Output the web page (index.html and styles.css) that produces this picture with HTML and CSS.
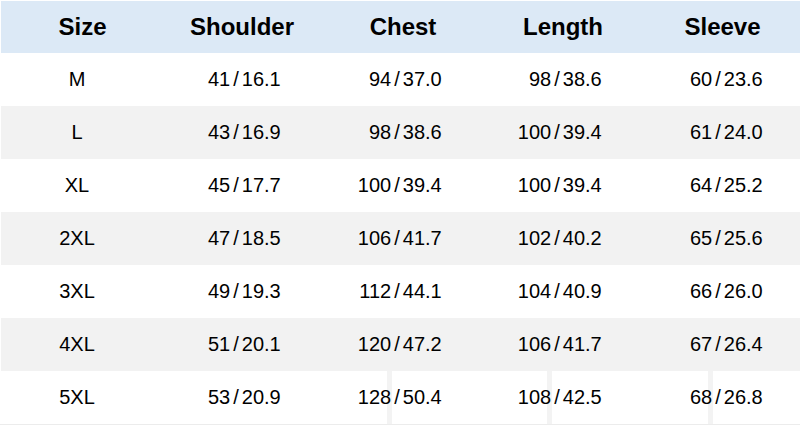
FILE: index.html
```html
<!DOCTYPE html>
<html lang="en">
<head>
<meta charset="utf-8">
<title>Size chart</title>
<link rel="stylesheet" href="styles.css">
</head>
<body>
<div class="chart">
  <div class="row head">
    <div class="cell size">Size</div>
    <div class="cell">Shoulder</div>
    <div class="cell">Chest</div>
    <div class="cell">Length</div>
    <div class="cell">Sleeve</div>
  </div>
  <div class="row">
    <div class="cell size">M</div>
    <div class="cell val"><span class="a">41</span><span class="s">/</span><span class="b">16.1</span></div>
    <div class="cell val"><span class="a">94</span><span class="s">/</span><span class="b">37.0</span></div>
    <div class="cell val"><span class="a">98</span><span class="s">/</span><span class="b">38.6</span></div>
    <div class="cell val"><span class="a">60</span><span class="s">/</span><span class="b">23.6</span></div>
  </div>
  <div class="row alt">
    <div class="cell size">L</div>
    <div class="cell val"><span class="a">43</span><span class="s">/</span><span class="b">16.9</span></div>
    <div class="cell val"><span class="a">98</span><span class="s">/</span><span class="b">38.6</span></div>
    <div class="cell val"><span class="a">100</span><span class="s">/</span><span class="b">39.4</span></div>
    <div class="cell val"><span class="a">61</span><span class="s">/</span><span class="b">24.0</span></div>
  </div>
  <div class="row">
    <div class="cell size">XL</div>
    <div class="cell val"><span class="a">45</span><span class="s">/</span><span class="b">17.7</span></div>
    <div class="cell val"><span class="a">100</span><span class="s">/</span><span class="b">39.4</span></div>
    <div class="cell val"><span class="a">100</span><span class="s">/</span><span class="b">39.4</span></div>
    <div class="cell val"><span class="a">64</span><span class="s">/</span><span class="b">25.2</span></div>
  </div>
  <div class="row alt">
    <div class="cell size">2XL</div>
    <div class="cell val"><span class="a">47</span><span class="s">/</span><span class="b">18.5</span></div>
    <div class="cell val"><span class="a">106</span><span class="s">/</span><span class="b">41.7</span></div>
    <div class="cell val"><span class="a">102</span><span class="s">/</span><span class="b">40.2</span></div>
    <div class="cell val"><span class="a">65</span><span class="s">/</span><span class="b">25.6</span></div>
  </div>
  <div class="row">
    <div class="cell size">3XL</div>
    <div class="cell val"><span class="a">49</span><span class="s">/</span><span class="b">19.3</span></div>
    <div class="cell val"><span class="a">112</span><span class="s">/</span><span class="b">44.1</span></div>
    <div class="cell val"><span class="a">104</span><span class="s">/</span><span class="b">40.9</span></div>
    <div class="cell val"><span class="a">66</span><span class="s">/</span><span class="b">26.0</span></div>
  </div>
  <div class="row alt">
    <div class="cell size">4XL</div>
    <div class="cell val"><span class="a">51</span><span class="s">/</span><span class="b">20.1</span></div>
    <div class="cell val"><span class="a">120</span><span class="s">/</span><span class="b">47.2</span></div>
    <div class="cell val"><span class="a">106</span><span class="s">/</span><span class="b">41.7</span></div>
    <div class="cell val"><span class="a">67</span><span class="s">/</span><span class="b">26.4</span></div>
  </div>
  <div class="row last">
    <div class="cell size">5XL</div>
    <div class="cell val"><span class="a">53</span><span class="s">/</span><span class="b">20.9</span></div>
    <div class="cell val mark"><span class="a">128</span><span class="s">/</span><span class="b">50.4</span></div>
    <div class="cell val mark"><span class="a">108</span><span class="s">/</span><span class="b">42.5</span></div>
    <div class="cell val mark"><span class="a">68</span><span class="s">/</span><span class="b">26.8</span></div>
  </div>
</div>
</body>
</html>
```

FILE: styles.css
```css
html {
  margin: 0;
  padding: 0;
  background: #ffffff;
}

body {
  margin: 0;
  padding: 0;
  font-family: "Liberation Sans", Arial, sans-serif;
  color: #000;
  width: 800px;
  height: 425px;
  overflow: hidden;
}

.chart {
  padding-top: 1px;
  padding-left: 1px;
  display: flex;
  flex-direction: column;
  border-bottom: 1px solid #ececec;
}

.row {
  display: grid;
  grid-template-columns: 158px 162px 160px 160px 159px;
  height: 53px;
  align-items: center;
}

.row.head {
  height: 52px;
  background: #dce9f6;
  font-weight: bold;
}

.row.alt {
  background: #f2f2f2;
}

.cell {
  text-align: center;
  font-size: 20px;
  padding-right: 8px;
}

.head .cell {
  font-size: 24px;
  padding-right: 0;
  padding-left: 4px;
}

.row .cell.size {
  padding-right: 6px;
  padding-left: 0;
}

.head .cell.size {
  padding-right: 0;
  padding-left: 5px;
}

.cell.val {
  display: grid;
  grid-template-columns: 1fr auto 1fr;
  align-items: center;
}

.row .cell.val:last-child {
  padding-right: 5px;
}

.val .a {
  text-align: right;
}

.val .s {
  padding: 0 3px;
}

.val .b {
  text-align: left;
}

.mark .s {
  position: relative;
}

.mark .s::before {
  content: "";
  position: absolute;
  z-index: -1;
  left: -4px;
  top: -16px;
  bottom: -16px;
  width: 5px;
  background: #f3f3f3;
}
```
